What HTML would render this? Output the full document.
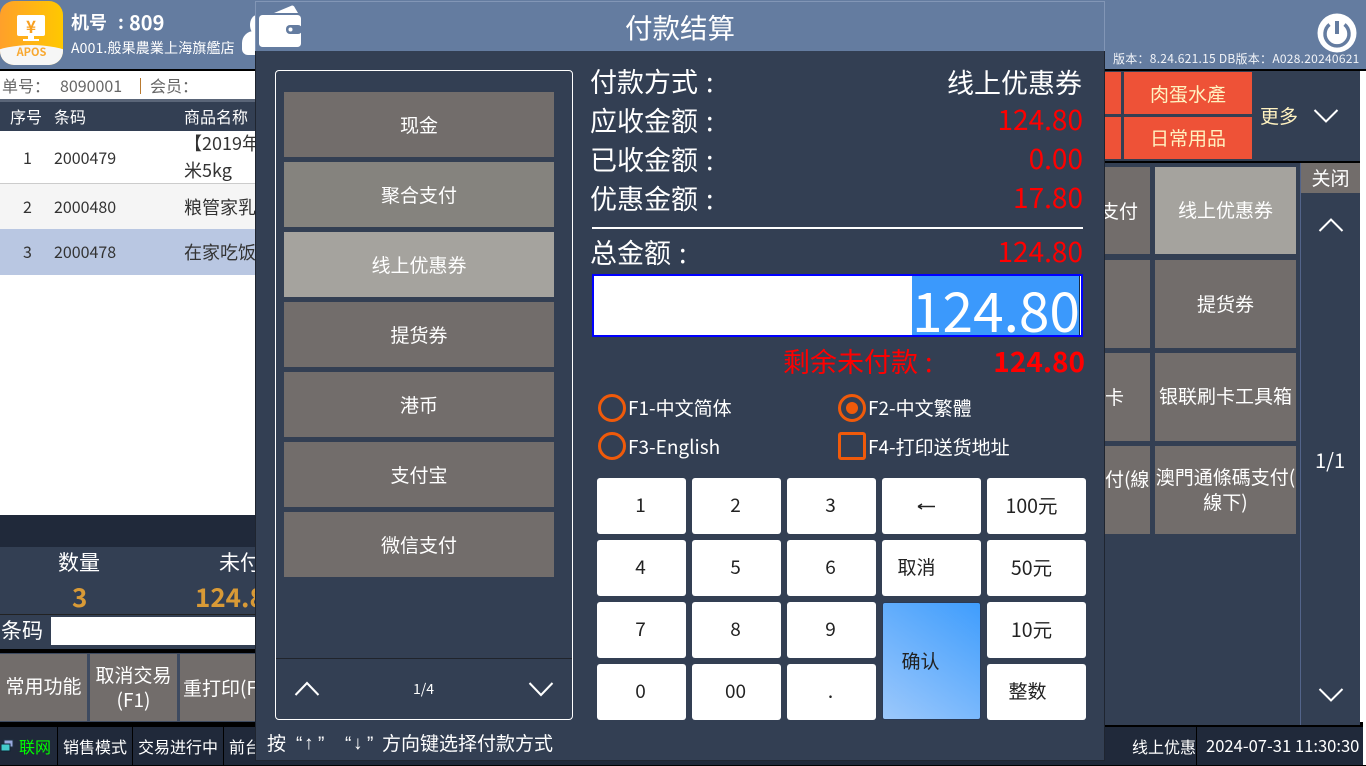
<!DOCTYPE html>
<html><head><meta charset="utf-8"><style>
html,body{margin:0;padding:0;background:#fff;width:1366px;height:766px;overflow:hidden}
body{font-family:"Noto Sans CJK SC","Liberation Sans",sans-serif;position:relative;color:#fff}
div,svg{position:absolute;box-sizing:border-box}
.t{white-space:nowrap;line-height:1}
.c{display:flex;align-items:center;justify-content:center;text-align:center}
.pb{left:284px;width:270px;height:65px;background:#726d6b;font-size:19px}
.rb{background:#726d6b;font-size:19px;line-height:1.3}
.k{background:#fff;color:#222;border-radius:3px;font-size:19px;height:56px;padding-bottom:3px}
.red{background:#ee5237;color:#fff2c0;font-size:19px}
.l{font-size:27px;left:590px}
.l span{margin-left:8px}
.o{border:3px solid #f05a0a;width:28px;height:28px;border-radius:50%}
.f{font-size:19px}
.q{font-family:"Liberation Sans",sans-serif;font-size:19px}
</style></head><body>

<div style="left:0;top:0;width:1366px;height:69px;background:#647ca0"></div>
<div style="left:0;top:69px;width:1366px;height:2px;background:#000"></div>
<div style="left:0;top:1px;width:63px;height:64px;border-radius:14px;overflow:hidden;background:linear-gradient(90deg,#ffa02a,#ffc800)">
<div style="left:-30px;top:44px;width:123px;height:60px;background:#f6f6f6;border-radius:50%"></div>
<div class="t" style="left:0;width:63px;top:46px;text-align:center;font-size:11px;font-weight:bold;color:#f8a830">APOS</div>
<div class="c" style="left:17px;top:14px;width:28px;height:21px;background:#fff;border-radius:2px;color:#f8a020;font-size:17px;font-weight:bold;line-height:1">¥</div>
<div style="left:28px;top:35px;width:6px;height:3px;background:#fff"></div>
<div style="left:23px;top:38px;width:16px;height:2px;background:#fff"></div>
</div>
<div class="t" style="left:71px;top:13px;font-size:18px;font-weight:bold">机号</div>
<div class="t" style="left:118px;top:13px;font-size:18px;font-weight:bold">:</div>
<div class="t" style="left:129px;top:12px;font-size:20px;font-weight:bold">809</div>
<div class="t" style="left:71px;top:41px;font-size:14px;letter-spacing:.15px">A001.般果農業上海旗艦店</div>
<div style="left:250px;top:15px;width:14px;height:20px;background:#fff;border-radius:50%"></div>
<div style="left:242px;top:31px;width:16px;height:24px;background:#fff;border-radius:12px 0 0 6px"></div>
<svg style="left:1317px;top:13px" width="40" height="40" viewBox="0 0 40 40"><circle cx="20" cy="20" r="19.5" fill="#fff"/><path d="M12.500 11.500A12 12 0 1 0 27.500 11.500" fill="none" stroke="#647ca0" stroke-width="3.500"/><path d="M20 8V21" stroke="#647ca0" stroke-width="4"/></svg>
<div class="t" style="left:1113px;top:53px;font-size:12px;letter-spacing:.26px;color:#f2f4f8">版本：8.24.621.15 DB版本：A028.20240621</div>

<div style="left:0;top:71px;width:256px;height:28px;background:#fff"></div>
<div class="t" style="left:2px;top:77px;font-size:16px;color:#666">单号：</div>
<div class="t" style="left:60px;top:77px;font-size:16px;color:#666">8090001</div>
<div style="left:140px;top:78px;width:1px;height:16px;background:#b97a30"></div>
<div class="t" style="left:150px;top:77px;font-size:16px;color:#666">会员：</div>
<div style="left:0;top:99px;width:256px;height:3px;background:#5a6578"></div>
<div style="left:0;top:102px;width:256px;height:29px;background:#333f53"></div>
<div class="t" style="left:10px;top:108px;font-size:16px">序号</div>
<div class="t" style="left:54px;top:108px;font-size:16px">条码</div>
<div class="t" style="left:184px;top:108px;font-size:16px">商品名称</div>
<div style="left:0;top:131px;width:256px;height:384px;background:#fff;overflow:hidden;color:#333">
<div style="left:0;top:52px;width:256px;height:46px;background:#f5f5f5;border-top:1px solid #ccc"></div>
<div style="left:0;top:98px;width:256px;height:46px;background:#b9c7e2"></div>
<div class="t" style="left:23px;top:18px;font-size:16px">1</div>
<div class="t" style="left:54px;top:18px;font-size:16px">2000479</div>
<div class="t" style="left:184px;top:3px;font-size:18px">【2019年</div>
<div class="t" style="left:184px;top:30px;font-size:18px">米5kg</div>
<div class="t" style="left:23px;top:67px;font-size:16px">2</div>
<div class="t" style="left:54px;top:67px;font-size:16px">2000480</div>
<div class="t" style="left:184px;top:67px;font-size:18px">粮管家乳</div>
<div class="t" style="left:23px;top:112px;font-size:16px">3</div>
<div class="t" style="left:54px;top:112px;font-size:16px">2000478</div>
<div class="t" style="left:184px;top:112px;font-size:18px">在家吃饭</div>
</div>
<div style="left:0;top:515px;width:256px;height:32px;background:#20293a"></div>
<div style="left:0;top:547px;width:256px;height:102px;background:#333f53"></div>
<div class="t" style="left:58px;top:552px;font-size:21px">数量</div>
<div class="t" style="left:219px;top:552px;font-size:21px">未付</div>
<div class="t" style="left:72px;top:584px;font-size:26px;font-weight:bold;color:#d99a36">3</div>
<div class="t" style="left:195px;top:584px;font-size:26px;font-weight:bold;color:#d99a36">124.80</div>
<div style="left:0;top:614px;width:256px;height:1px;background:#222"></div>
<div class="t" style="left:1px;top:620px;font-size:21px">条码</div>
<div style="left:51px;top:617px;width:205px;height:28px;background:#fff"></div>
<div style="left:0;top:649px;width:256px;height:4px;background:#000"></div>
<div style="left:0;top:653px;width:256px;height:69px;background:#3d4a60"></div>
<div class="c rb" style="left:0;top:654px;width:87px;height:67px;padding-bottom:2px">常用功能</div>
<div class="c rb" style="left:90px;top:654px;width:87px;height:67px">取消交易<br>(F1)</div>
<div class="rb" style="left:180px;top:654px;width:76px;height:67px;overflow:hidden"><div class="t" style="left:3px;top:24px">重打印(F</div></div>
<div style="left:0;top:722px;width:1363px;height:5px;background:#000"></div>
<div style="left:0;top:727px;width:1363px;height:38px;background:#20293a"></div>
<div style="left:0;top:765px;width:1366px;height:1px;background:#000"></div>
<div style="left:57px;top:727px;width:1px;height:38px;background:#000"></div>
<div style="left:132px;top:727px;width:1px;height:38px;background:#000"></div>
<div style="left:223px;top:727px;width:1px;height:38px;background:#000"></div>
<svg style="left:1px;top:739px" width="14" height="14"><rect x="3" y="1" width="9" height="7" fill="#9ad" stroke="#234"/><rect x="0" y="5" width="9" height="7" fill="#4cc" stroke="#123"/></svg>
<div class="t" style="left:19px;top:738px;font-size:16px;color:#0f0">联网</div>
<div class="t" style="left:63px;top:738px;font-size:16px">销售模式</div>
<div class="t" style="left:138px;top:738px;font-size:16px">交易进行中</div>
<div class="t" style="left:229px;top:738px;font-size:16px">前台</div>

<div style="left:1105px;top:71px;width:255px;height:90px;background:#333f53"></div>
<div class="red" style="left:1105px;top:72px;width:16px;height:42px"></div>
<div class="red" style="left:1105px;top:117px;width:16px;height:42px"></div>
<div class="c red" style="left:1124px;top:72px;width:128px;height:42px">肉蛋水產</div>
<div class="c red" style="left:1124px;top:117px;width:128px;height:42px;padding-bottom:2px">日常用品</div>
<div class="t" style="left:1260px;top:106px;font-size:19px;color:#fff2c0">更多</div>
<svg style="left:1313px;top:108px" width="26" height="18"><path d="M1.500 2L13 13.500L24.500 2" fill="none" stroke="#fff" stroke-width="2"/></svg>
<div style="left:1105px;top:161px;width:255px;height:2px;background:#000"></div>
<div style="left:1105px;top:163px;width:255px;height:562px;background:#333f53"></div>
<div style="left:1300px;top:163px;width:1px;height:562px;background:#53648a"></div>
<div class="c" style="left:1301px;top:163px;width:59px;height:30px;background:#726d6b;font-size:19px;padding-bottom:2px">关闭</div>
<svg style="left:1318px;top:217px" width="26" height="16"><path d="M1.500 14L13 2.500L24.500 14" fill="none" stroke="#fff" stroke-width="2"/></svg>
<svg style="left:1318px;top:687px" width="26" height="16"><path d="M1.500 2L13 13.500L24.500 2" fill="none" stroke="#fff" stroke-width="2"/></svg>
<div class="t" style="left:1315px;top:450px;font-size:20px">1/1</div>
<div class="rb" style="left:1105px;top:167px;width:45px;height:87px;overflow:hidden"><div class="t" style="left:-5px;top:34px">支付</div></div>
<div class="c rb" style="left:1155px;top:167px;width:141px;height:87px;background:#a5a39e">线上优惠券</div>
<div class="rb" style="left:1105px;top:260px;width:45px;height:88px"></div>
<div class="c rb" style="left:1155px;top:260px;width:141px;height:88px">提货券</div>
<div class="rb" style="left:1105px;top:353px;width:45px;height:88px;overflow:hidden"><div class="t" style="left:0;top:34px">卡</div></div>
<div class="c rb" style="left:1155px;top:353px;width:141px;height:88px;padding-bottom:2px">银联刷卡工具箱</div>
<div class="rb" style="left:1105px;top:446px;width:45px;height:88px;overflow:hidden"><div class="t" style="left:0;top:23px">付(線</div></div>
<div class="c rb" style="left:1155px;top:446px;width:141px;height:88px;white-space:nowrap">澳門通條碼支付(<br>線下)</div>
<div class="t" style="left:1132px;top:738px;font-size:16px">线上优惠</div>
<div style="left:1196px;top:727px;width:1px;height:38px;background:#000"></div>
<div class="t" style="left:1206px;top:737px;font-size:16.6px">2024-07-31 11:30:30</div>

<div style="left:255px;top:1px;width:850px;height:760px;background:#333f53;border:1px solid #1f2530;border-top:0"></div>
<div style="left:255px;top:1px;width:850px;height:50px;background:#647ca0;border:1px solid #8296b6;border-bottom:0"></div>
<svg style="left:258px;top:5px" width="44" height="42"><path d="M16 8L34 0.500Q36 0.500 37 3L40 8Z" fill="#fff"/><rect x="1" y="10" width="42" height="32" rx="3.500" fill="#fff"/><rect x="28" y="20" width="16" height="9" rx="4" fill="#647ca0"/><circle cx="32.500" cy="24.500" r="2" fill="#fff"/></svg>
<div class="t" style="left:255px;width:850px;top:13px;text-align:center;font-size:27.5px">付款结算</div>

<div style="left:275px;top:70px;width:298px;height:650px;border:1px solid #fff;border-radius:4px"></div>
<div class="c pb" style="top:92px">现金</div>
<div class="c pb" style="top:162px;background:#85837e">聚合支付</div>
<div class="c pb" style="top:232px;background:#a5a39e">线上优惠券</div>
<div class="c pb" style="top:302px">提货券</div>
<div class="c pb" style="top:372px">港币</div>
<div class="c pb" style="top:442px">支付宝</div>
<div class="c pb" style="top:512px">微信支付</div>
<div style="left:276px;top:658px;width:296px;height:1px;background:#20242c"></div>
<svg style="left:294px;top:680px" width="26" height="17"><path d="M1.500 15L13 3L24.500 15" fill="none" stroke="#fff" stroke-width="2"/></svg>
<svg style="left:528px;top:681px" width="26" height="17"><path d="M1.500 2L13 14L24.500 2" fill="none" stroke="#fff" stroke-width="2"/></svg>
<div class="t" style="left:413px;top:682px;font-size:14px">1/4</div>
<div class="t f" style="left:267px;top:733px">按</div>
<div class="t q" style="left:296px;top:735px">“</div>
<div class="t q" style="left:304px;top:734px">↑</div>
<div class="t q" style="left:318px;top:735px">”</div>
<div class="t q" style="left:345px;top:735px">“</div>
<div class="t q" style="left:353px;top:734px">↓</div>
<div class="t q" style="left:367px;top:735px">”</div>
<div class="t f" style="left:382px;top:733px">方向键选择付款方式</div>

<div class="t l" style="top:67px">付款方式<span>:</span></div>
<div class="t" style="right:284px;top:68px;font-size:27px">线上优惠券</div>
<div class="t l" style="top:106px">应收金额<span>:</span></div>
<div class="t" style="right:283px;top:105px;font-size:28px;color:#f00">124.80</div>
<div class="t l" style="top:145px">已收金额<span>:</span></div>
<div class="t" style="right:283px;top:144px;font-size:28px;color:#f00">0.00</div>
<div class="t l" style="top:184px">优惠金额<span>:</span></div>
<div class="t" style="right:283px;top:183px;font-size:28px;color:#f00">17.80</div>
<div style="left:592px;top:227px;width:491px;height:2px;background:#fff"></div>
<div class="t l" style="top:238px">总金额<span>:</span></div>
<div class="t" style="right:283px;top:237px;font-size:28px;color:#f00">124.80</div>
<div style="left:592px;top:274px;width:491px;height:63px;background:#fff;border:2px solid #00f"></div>
<div class="t" style="left:912px;top:276px;width:168px;height:59px;background:#3b99fc;font-size:55px;line-height:64px;text-align:center;overflow:hidden">124.80</div>
<div style="left:1079px;top:276px;width:1px;height:59px;background:#1a2c44"></div>
<div class="t" style="left:783px;top:347px;font-size:27px;color:#f00">剩余未付款</div>
<div class="t" style="left:925px;top:347px;font-size:27px;color:#f00">:</div>
<div class="t" style="right:281px;top:347px;font-size:28px;font-weight:bold;color:#f00">124.80</div>

<div class="o" style="left:598px;top:394px"></div>
<div class="t f" style="left:628px;top:398px">F1-中文简体</div>
<div class="o" style="left:838px;top:394px"></div>
<div style="left:846px;top:402px;width:12px;height:12px;border-radius:50%;background:#f05a0a"></div>
<div class="t f" style="left:868px;top:398px">F2-中文繁體</div>
<div class="o" style="left:598px;top:432px"></div>
<div class="t f" style="left:628px;top:437px">F3-English</div>
<div style="left:838px;top:432px;width:28px;height:28px;border:3px solid #f05a0a;border-radius:3px"></div>
<div class="t f" style="left:868px;top:437px">F4-打印送货地址</div>

<div class="c k" style="left:597px;top:478px;width:89px;padding-right:2px">1</div>
<div class="c k" style="left:692px;top:478px;width:89px;padding-right:2px">2</div>
<div class="c k" style="left:787px;top:478px;width:89px;padding-right:2px">3</div>
<div class="k" style="left:882px;top:478px;width:99px"><svg style="left:35px;top:25px" width="19" height="7"><path d="M1 3.500H18M1 3.500L5 1M1 3.500L5 6" fill="none" stroke="#222" stroke-width="1.400"/></svg></div>
<div class="c k" style="left:987px;top:478px;width:99px;padding-right:10px;font-size:19.5px">100元</div>
<div class="c k" style="left:597px;top:540px;width:89px;padding-right:2px">4</div>
<div class="c k" style="left:692px;top:540px;width:89px;padding-right:2px">5</div>
<div class="c k" style="left:787px;top:540px;width:89px;padding-right:2px">6</div>
<div class="c k" style="left:882px;top:540px;width:99px;padding-right:30px">取消</div>
<div class="c k" style="left:987px;top:540px;width:99px;padding-right:10px;font-size:19.5px">50元</div>
<div class="c k" style="left:597px;top:602px;width:89px;padding-right:2px">7</div>
<div class="c k" style="left:692px;top:602px;width:89px;padding-right:2px">8</div>
<div class="c k" style="left:787px;top:602px;width:89px;padding-right:2px">9</div>
<div class="c k" style="left:882px;top:602px;width:99px;height:118px;background:linear-gradient(215deg,#3f9dfd,#9cc8fb);padding:0 22px 2px 0;border:1px solid #2a3a55">确认</div>
<div class="c k" style="left:987px;top:602px;width:99px;padding-right:10px;font-size:19.5px">10元</div>
<div class="c k" style="left:597px;top:664px;width:89px;padding-right:2px">0</div>
<div class="c k" style="left:692px;top:664px;width:89px;padding-right:2px">00</div>
<div class="c k" style="left:787px;top:664px;width:89px;padding-right:2px">.</div>
<div class="c k" style="left:987px;top:664px;width:99px;padding-right:18px">整数</div>
</body></html>
